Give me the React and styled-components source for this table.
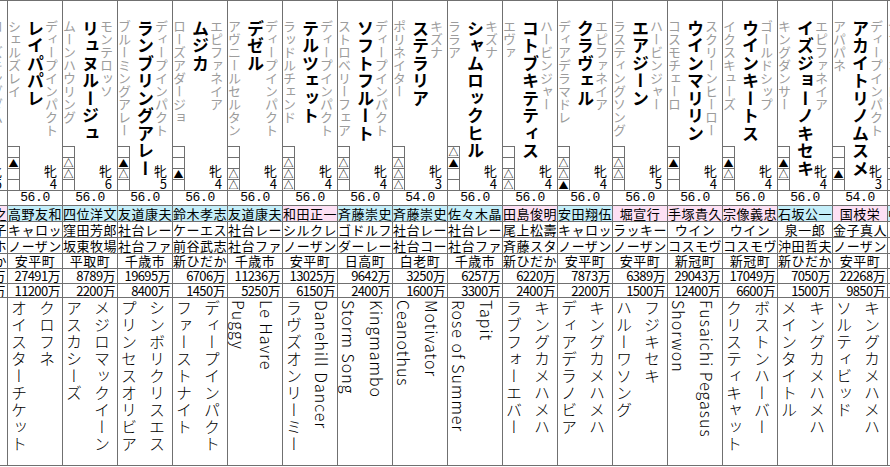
import React from "react";
import styled, { createGlobalStyle } from "styled-components";

const GlobalStyle = createGlobalStyle`
  html, body {
    margin: 0;
    padding: 0;
    background: #fff;
    overflow: hidden;
  }
  body {
    font-family: "Noto Sans CJK JP", "Noto Sans", sans-serif;
    color: #000;
  }
`;

const LINE = "#707070";

const Board = styled.div`
  display: flex;
  width: max-content;
  margin-left: -48px;
  border-top: 1px solid ${LINE};
`;

const Column = styled.div`
  width: 55px;
  box-sizing: border-box;
  border-left: 1px solid ${LINE};
  display: flex;
  flex-direction: column;
`;

const Head = styled.div`
  height: 190px;
  box-sizing: border-box;
  border-bottom: 1px solid ${LINE};
  display: grid;
  grid-template-columns: 12px 1fr auto;
  grid-template-rows: 1fr 44px;
`;

const Names = styled.div`
  grid-row: 1 / 3;
  grid-column: 1 / 4;
  display: flex;
  flex-direction: row-reverse;
  align-items: flex-start;
  padding: 19px 4px 0 0;
`;

const Sire = styled.div`
  writing-mode: vertical-rl;
  white-space: nowrap;
  font-size: 13px;
  line-height: 13px;
  color: #9c9c9c;
`;

const HorseName = styled.div`
  writing-mode: vertical-rl;
  white-space: nowrap;
  font-size: 17px;
  line-height: 17px;
  letter-spacing: 0.5px;
  font-weight: 700;
  margin-right: 1px;
`;

const Dam = styled.div`
  writing-mode: vertical-rl;
  white-space: nowrap;
  font-size: 13px;
  line-height: 13px;
  color: #9c9c9c;
  margin-right: 6px;
`;

const Marks = styled.div`
  grid-row: 2;
  grid-column: 1;
  box-sizing: border-box;
  border-right: 1px solid ${LINE};
  display: flex;
  flex-direction: column;
  background: #fff;
`;

const MarkBox = styled.div`
  height: 11px;
  box-sizing: border-box;
  border-top: 1px solid ${LINE};
  font-size: 10px;
  line-height: 10px;
  text-align: center;
`;

const SexAge = styled.div`
  grid-row: 2;
  grid-column: 3;
  align-self: end;
  text-align: right;
  font-size: 13px;
  line-height: 13px;
  padding-right: 5px;
`;

const Cell = styled.div`
  height: ${(p) => p.$h}px;
  box-sizing: border-box;
  border-bottom: 1px solid ${LINE};
  background: ${(p) => p.$bg || "transparent"};
  font-size: 13px;
  line-height: ${(p) => p.$h - 1}px;
  text-align: ${(p) => p.$align || "center"};
  white-space: nowrap;
  overflow: hidden;
  letter-spacing: 0.5px;
`;

const Weight = styled(Cell)`
  font-family: "Liberation Mono", monospace;
  font-size: 13px;
  letter-spacing: -0.4px;
`;

const Money = styled(Cell)`
  letter-spacing: -0.6px;
  padding-right: 2px;
`;

const Pedigree = styled.div`
  height: 168px;
  box-sizing: border-box;
  border-bottom: 1px solid ${LINE};
  display: flex;
  flex-direction: row-reverse;
  align-items: flex-start;
  gap: 12px;
  padding: 2px 7px 0 0;
`;

const PedLine = styled.div`
  writing-mode: vertical-rl;
  white-space: nowrap;
  font-size: 16px;
  line-height: 16px;
  letter-spacing: 1px;
  font-weight: 300;
`;

const WEST = "#c4eef9";
const EAST = "#fde0f4";

const horses = [
  { sire: "ローズキングダム", name: "ロザムール", dam: "", marks: ["", "", "", ""], age: 5, wt: "56.0", tr: "上原博之", east: true, owner: "　　　子", breeder: "　　　ホ", area: "新ひだか", e1: "万", e2: "万", ped: ["", ""] },
  { sire: "ディープインパクト", name: "レイパパレ", dam: "シェルズレイ", marks: ["", "▲", "", ""], age: 4, wt: "56.0", tr: "高野友和", owner: "キャロッ", breeder: "ノーザン", area: "安平町", e1: "27491万", e2: "11200万", ped: ["クロフネ", "オイスターチケット"] },
  { sire: "モンテロッソ", name: "リュヌルージュ", dam: "ムーンハウリング", marks: ["", "△", "△", ""], age: 6, wt: "56.0", tr: "四位洋文", owner: "窪田芳郎", breeder: "坂東牧場", area: "平取町", e1: "8789万", e2: "2200万", ped: ["メジロマックイーン", "アスカシーズ"] },
  { sire: "ディープインパクト", name: "ランブリングアレー", dam: "ブルーミングアレー", marks: ["", "▲", "△", ""], age: 5, wt: "56.0", tr: "友道康夫", owner: "社台レー", breeder: "社台ファ", area: "千歳市", e1: "19695万", e2: "8400万", ped: ["シンボリクリスエス", "プリンセスオリビア"] },
  { sire: "エピファネイア", name: "ムジカ", dam: "ローズアダージョ", marks: ["", "", "▲", ""], age: 4, wt: "56.0", tr: "鈴木孝志", owner: "ケーエス", breeder: "前谷武志", area: "新ひだか", e1: "6706万", e2: "1450万", ped: ["ディープインパクト", "ファーストナイト"] },
  { sire: "ディープインパクト", name: "デゼル", dam: "アヴニールセルタン", marks: ["", "", "△", "△"], age: 4, wt: "56.0", tr: "友道康夫", owner: "社台レー", breeder: "社台ファ", area: "千歳市", e1: "11236万", e2: "5250万", ped: ["Le Havre", "Puggy"] },
  { sire: "ディープインパクト", name: "テルツェット", dam: "ラッドルチェンド", marks: ["", "△", "△", "△"], age: 4, wt: "56.0", tr: "和田正一", east: true, owner: "シルクレ", breeder: "ノーザン", area: "安平町", e1: "13025万", e2: "6150万", ped: ["Danehill Dancer", "ラヴズオンリーミー"] },
  { sire: "ディープインパクト", name: "ソフトフルート", dam: "ストロベリーフェア", marks: ["", "△", "△", ""], age: 4, wt: "56.0", tr: "斉藤崇史", owner: "ゴドルフ", breeder: "ダーレー", area: "日高町", e1: "9642万", e2: "2400万", ped: ["Kingmambo", "Storm Song"] },
  { sire: "キズナ", name: "ステラリア", dam: "ポリネイター", marks: ["", "△", "△", "△"], age: 3, wt: "54.0", tr: "斉藤崇史", owner: "社台レー", breeder: "社台コー", area: "白老町", e1: "3250万", e2: "1600万", ped: ["Motivator", "Ceanothus"] },
  { sire: "キズナ", name: "シャムロックヒル", dam: "ララア", marks: ["△", "▲", "", ""], age: 4, wt: "56.0", tr: "佐々木晶", owner: "社台レー", breeder: "社台ファ", area: "千歳市", e1: "6257万", e2: "3300万", ped: ["Tapit", "Rose of Summer"] },
  { sire: "ハービンジャー", name: "コトブキテティス", dam: "エヴァ", marks: ["", "", "△", "△"], age: 4, wt: "56.0", tr: "田島俊明", east: true, owner: "尾上松壽", breeder: "斉藤スタ", area: "新ひだか", e1: "6220万", e2: "2400万", ped: ["キングカメハメハ", "ラブフォーエバー"] },
  { sire: "エピファネイア", name: "クラヴェル", dam: "ディアデラマドレ", marks: ["", "△", "△", "▲"], age: 4, wt: "56.0", tr: "安田翔伍", owner: "キャロッ", breeder: "ノーザン", area: "安平町", e1: "7873万", e2: "2200万", ped: ["キングカメハメハ", "ディアデラノビア"] },
  { sire: "ハービンジャー", name: "エアジーン", dam: "ラスティングソング", marks: ["", "△", "△", ""], age: 5, wt: "56.0", tr: "堀宣行", east: true, owner: "ラッキー", breeder: "ノーザン", area: "安平町", e1: "6389万", e2: "1500万", ped: ["フジキセキ", "ハルーワソング"] },
  { sire: "スクリーンヒーロー", name: "ウインマリリン", dam: "コスモチェーロ", marks: ["", "▲", "", ""], age: 4, wt: "56.0", tr: "手塚貴久", east: true, owner: "ウイン", breeder: "コスモヴ", area: "新冠町", e1: "29043万", e2: "12400万", ped: ["Fusaichi Pegasus", "Shorwon"] },
  { sire: "ゴールドシップ", name: "ウインキートス", dam: "イクスキューズ", marks: ["", "▲", "△", ""], age: 4, wt: "56.0", tr: "宗像義忠", east: true, owner: "ウイン", breeder: "コスモヴ", area: "新冠町", e1: "17049万", e2: "6600万", ped: ["ボストンハーバー", "クリスティキャット"] },
  { sire: "エピファネイア", name: "イズジョーノキセキ", dam: "キングダンサー", marks: ["", "▲", "△", ""], age: 4, wt: "56.0", tr: "石坂公一", owner: "泉一郎", breeder: "沖田哲夫", area: "新ひだか", e1: "7050万", e2: "1500万", ped: ["キングカメハメハ", "メインタイトル"] },
  { sire: "ディープインパクト", name: "アカイトリノムスメ", dam: "アパパネ", marks: ["", "", "▲", ""], age: 3, wt: "54.0", tr: "国枝栄", east: true, owner: "金子真人", breeder: "ノーザン", area: "安平町", e1: "22268万", e2: "9850万", ped: ["キングカメハメハ", "ソルティビッド"] },
  { sire: "キズナ", name: "アカイイト", dam: "ヤマトオーロラ", marks: ["", "", "", ""], age: 4, wt: "56.0", tr: "中竹和也", owner: "", breeder: "", area: "", e1: "", e2: "", ped: ["", ""] },
];

function HorseColumn({ h }) {
  return (
    <Column>
      <Head>
        <Names>
          <Sire>{h.sire}</Sire>
          <HorseName>{h.name}</HorseName>
          <Dam>{h.dam}</Dam>
        </Names>
        <Marks>
          {h.marks.map((m, i) => (
            <MarkBox key={i}>{m}</MarkBox>
          ))}
        </Marks>
        <SexAge>
          牝
          <br />
          {h.age}
        </SexAge>
      </Head>
      <Weight $h={15}>{h.wt}</Weight>
      <Cell $h={16} $bg={h.east ? EAST : WEST}>
        {h.tr}
      </Cell>
      <Cell $h={16}>{h.owner}</Cell>
      <Cell $h={16}>{h.breeder}</Cell>
      <Cell $h={15}>{h.area}</Cell>
      <Money $h={15} $align="right">
        {h.e1}
      </Money>
      <Money $h={14} $align="right">
        {h.e2}
      </Money>
      <Pedigree>
        <PedLine>{h.ped[0]}</PedLine>
        <PedLine>{h.ped[1]}</PedLine>
      </Pedigree>
    </Column>
  );
}

export default function App() {
  return (
    <>
      <GlobalStyle />
      <Board>
        {horses.map((h, i) => (
          <HorseColumn key={i} h={h} />
        ))}
      </Board>
    </>
  );
}
